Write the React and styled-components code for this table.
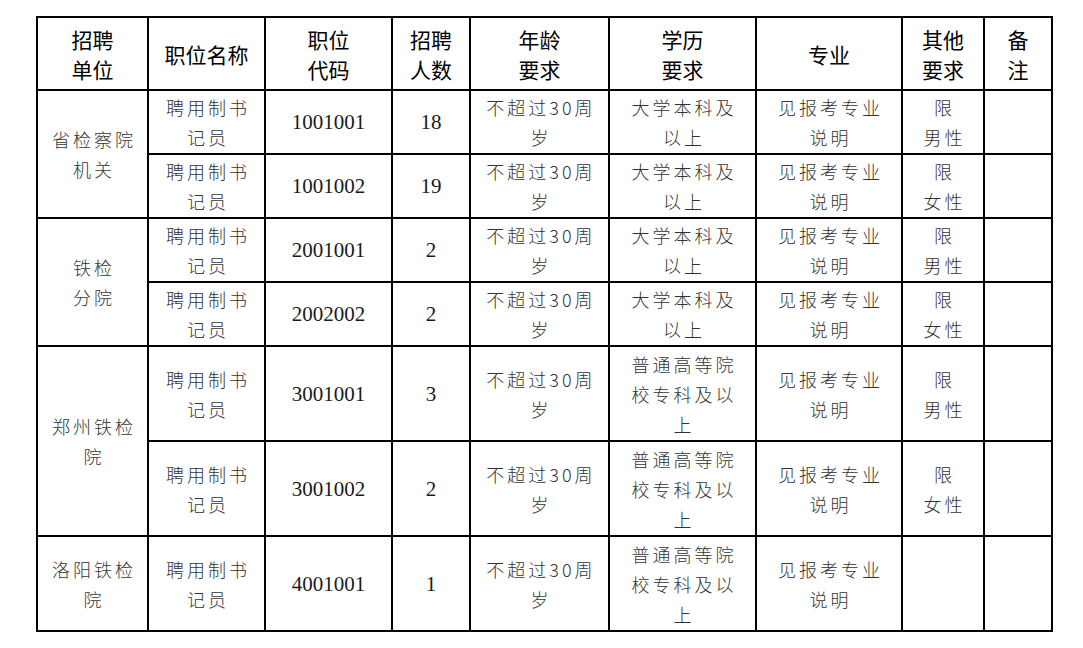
import React from "react";
import styled, { createGlobalStyle } from "styled-components";

const GlobalStyle = createGlobalStyle`
  html, body {
    margin: 0;
    padding: 0;
    background: #ffffff;
  }
`;

const Page = styled.div`
  padding: 16px 0 0 36px;
  width: 1083px;
  height: 648px;
  box-sizing: border-box;
`;

const Table = styled.table`
  border-collapse: collapse;
  table-layout: fixed;
  width: 1016px;
  border: 2px solid #000;
`;

const HeadCell = styled.th`
  border: 2px solid #000;
  height: 71px;
  padding: 0;
  text-align: center;
  vertical-align: middle;
  font-family: "Noto Sans CJK SC", "Noto Sans", sans-serif;
  font-weight: 400;
  font-size: 21px;
  line-height: 30px;
  color: #000;
`;

const Cell = styled.td`
  border: 2px solid #000;
  height: ${(p) => p.$h}px;
  padding: 0;
  text-align: center;
  vertical-align: middle;
  font-family: ${(p) =>
    p.$num
      ? '"Liberation Serif", "Times New Roman", serif'
      : '"Noto Sans CJK SC", "Noto Sans", sans-serif'};
  font-weight: ${(p) => (p.$num ? 400 : 300)};
  font-size: ${(p) => (p.$num ? "21px" : "18px")};
  letter-spacing: ${(p) => (p.$num ? "0" : "3px")};
  line-height: 30px;
  color: ${(p) => (p.$num ? "#1a1a1a" : "#333")};
`;

const Line = styled.div`
  white-space: nowrap;
  padding-left: ${(p) => (p.$spaced ? "3px" : "0")};
`;

const widths = [111, 117, 127, 78, 139, 147, 146, 82, 68];

const headers = [
  ["招聘", "单位"],
  ["职位名称"],
  ["职位", "代码"],
  ["招聘", "人数"],
  ["年龄", "要求"],
  ["学历", "要求"],
  ["专业"],
  ["其他", "要求"],
  ["备", "注"],
];

const age = ["不超过30周", "岁"];
const job = ["聘用制书", "记员"];
const major = ["见报考专业", "说明"];
const eduBach = ["大学本科及", "以上"];
const eduCollege = ["普通高等院", "校专科及以", "上"];

const rows = [
  { unit: ["省检察院", "机关"], span: 2, code: "1001001", num: "18", edu: eduBach, other: ["限", "男性"], h: 62 },
  { code: "1001002", num: "19", edu: eduBach, other: ["限", "女性"], h: 62 },
  { unit: ["铁检", "分院"], span: 2, code: "2001001", num: "2", edu: eduBach, other: ["限", "男性"], h: 62 },
  { code: "2002002", num: "2", edu: eduBach, other: ["限", "女性"], h: 62 },
  { unit: ["郑州铁检", "院"], span: 2, code: "3001001", num: "3", edu: eduCollege, other: ["限", "男性"], h: 93 },
  { code: "3001002", num: "2", edu: eduCollege, other: ["限", "女性"], h: 93 },
  { unit: ["洛阳铁检", "院"], span: 1, code: "4001001", num: "1", edu: eduCollege, other: [], h: 93 },
];

const Lines = ({ items, spaced }) =>
  items.map((t, i) => (
    <Line key={i} $spaced={spaced}>
      {t}
    </Line>
  ));

export default function App() {
  return (
    <Page>
      <GlobalStyle />
      <Table>
        <colgroup>
          {widths.map((w, i) => (
            <col key={i} style={{ width: w }} />
          ))}
        </colgroup>
        <thead>
          <tr>
            {headers.map((h, i) => (
              <HeadCell key={i}>
                <Lines items={h} />
              </HeadCell>
            ))}
          </tr>
        </thead>
        <tbody>
          {rows.map((r, i) => (
            <tr key={i}>
              {r.unit && (
                <Cell rowSpan={r.span} $h={r.h}>
                  <Lines items={r.unit} spaced />
                </Cell>
              )}
              <Cell $h={r.h}>
                <Lines items={job} spaced />
              </Cell>
              <Cell $h={r.h} $num>
                {r.code}
              </Cell>
              <Cell $h={r.h} $num>
                {r.num}
              </Cell>
              <Cell $h={r.h}>
                <Lines items={age} spaced />
              </Cell>
              <Cell $h={r.h}>
                <Lines items={r.edu} spaced />
              </Cell>
              <Cell $h={r.h}>
                <Lines items={major} spaced />
              </Cell>
              <Cell $h={r.h}>
                <Lines items={r.other} spaced />
              </Cell>
              <Cell $h={r.h} />
            </tr>
          ))}
        </tbody>
      </Table>
    </Page>
  );
}
